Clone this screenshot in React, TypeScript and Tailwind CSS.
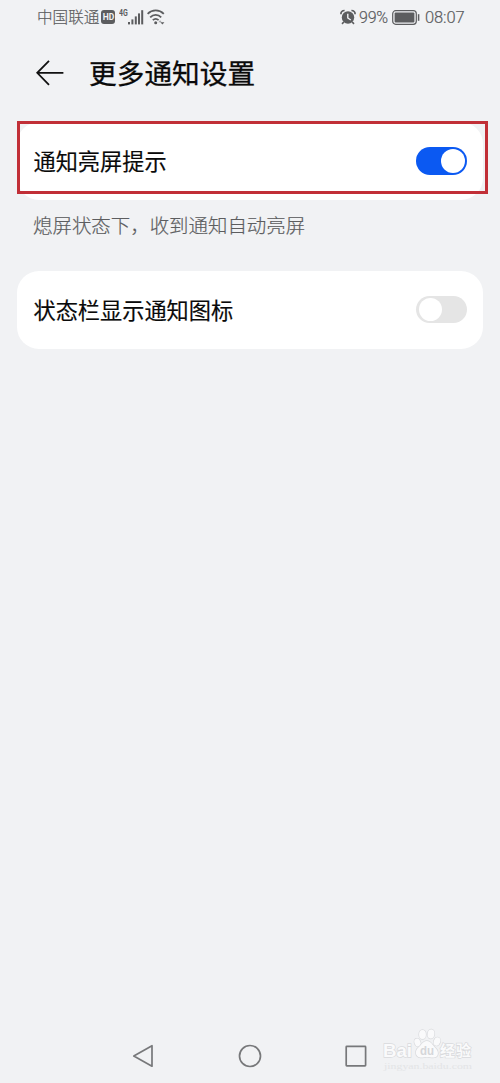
import React, { useState } from 'react'

function HdBadge() {
  return (
    <span className="flex h-[14px] w-[14px] items-center justify-center rounded-[3px] bg-[#5c5d5f] font-['Roboto',sans-serif] text-[8.5px] leading-none font-bold text-[#f1f2f4]">
      HD
    </span>
  )
}

function SignalIcon() {
  return (
    <svg className="h-[15px] w-[16px]" viewBox="0 0 16 15" fill="#5c5d5f">
      <rect x="0" y="12" width="2" height="2.4" />
      <rect x="3.4" y="9.4" width="2" height="5" />
      <rect x="6.8" y="6.4" width="2" height="8" />
      <rect x="10" y="3.4" width="2" height="11" />
      <rect x="13.2" y="0.2" width="2" height="14.2" />
    </svg>
  )
}

function WifiIcon() {
  return (
    <svg className="h-[16px] w-[18px]" viewBox="0 0 18 16" fill="none" stroke="#5c5d5f" strokeWidth="1.8">
      <path d="M0.6 4.9C5.2 0.3 12.2 0.3 16.8 4.9" />
      <path d="M3.2 8.3C6.3 5.1 11.1 5.1 14.2 8.3" />
      <path d="M5.8 11.2C7.5 9.6 9.9 9.6 11.6 11.2" />
      <circle cx="8.7" cy="13.8" r="1.5" fill="#5c5d5f" stroke="none" />
      <path d="M11.4 13.2l1.7-2 1.7 2z" fill="#a5a6a8" stroke="none" />
      <path d="M13.4 13.2h4l-2 2.3z" fill="#5c5d5f" stroke="none" />
    </svg>
  )
}

function AlarmIcon() {
  return (
    <svg className="h-[16px] w-[16px]" viewBox="0 0 16 16" fill="none">
      <circle cx="8" cy="8.5" r="6.2" fill="#5c5d5f" />
      <path
        d="M0.9 5.2C0.9 3 2.4 1.5 4.6 1.5M15.1 5.2C15.1 3 13.6 1.5 11.4 1.5M3.8 13L2 14.8M12.2 13l1.8 1.8"
        stroke="#5c5d5f"
        strokeWidth="1.7"
      />
      <path d="M7.8 4.8v4.2l3 2" stroke="#f1f2f4" strokeWidth="1.4" />
    </svg>
  )
}

function BatteryIcon() {
  return (
    <svg className="h-[15px] w-[28px]" viewBox="0 0 28 15" fill="none">
      <rect x="0.7" y="0.7" width="23.6" height="13.6" rx="3" stroke="#5c5d5f" strokeWidth="1.2" />
      <rect x="2.6" y="2.6" width="19.8" height="9.8" rx="1" fill="#5c5d5f" />
      <path d="M26.6 4.2v6.6" stroke="#5c5d5f" strokeWidth="1.5" />
    </svg>
  )
}

function StatusBar() {
  return (
    <div className="flex h-[34px] items-center justify-between pr-[36px] pl-[37px] text-[#5c5d5f]">
      <div className="flex items-center">
        <span className="text-[15.6px] leading-none font-light [-webkit-text-stroke:0.2px_#5c5d5f]">中国联通</span>
        <div className="ml-[2px]">
          <HdBadge />
        </div>
        <span className="mb-[8px] ml-[4px] w-[9px] origin-left scale-x-[0.82] font-['Roboto',sans-serif] text-[8.5px] leading-none font-bold">
          4G
        </span>
        <SignalIcon />
        <div className="ml-[3px]">
          <WifiIcon />
        </div>
      </div>
      <div className="flex items-center font-['Roboto',sans-serif] text-[16.5px] leading-none font-light [-webkit-text-stroke:0.2px_#5c5d5f]">
        <AlarmIcon />
        <span className="mt-[2px] ml-[3px] w-[30px] text-[16px] tracking-[-0.2px]">99%</span>
        <div className="ml-[3px]">
          <BatteryIcon />
        </div>
        <span className="mt-[2px] ml-[5px] w-[39px] tracking-[-0.1px]">08:07</span>
      </div>
    </div>
  )
}

function Header() {
  return (
    <header className="flex h-[78px] items-center pl-[36px]">
      <svg className="mt-[-1px] h-[26px] w-[28px]" viewBox="0 0 28 26" fill="none" stroke="#111" strokeWidth="1.8">
        <path d="M13 0.8L1.2 12.8L13 24.8M1.2 12.8H27.4" />
      </svg>
      <h1 className="ml-[25px] text-[27.7px] leading-none font-normal text-[#0a0a0a] [-webkit-text-stroke:0.3px_#0a0a0a]">
        更多通知设置
      </h1>
    </header>
  )
}

type ToggleProps = {
  checked: boolean
  onChange: () => void
}

function Toggle({ checked, onChange }: ToggleProps) {
  return (
    <button
      role="switch"
      aria-checked={checked}
      onClick={onChange}
      className={`flex w-[51px] items-center rounded-full px-[2.5px] ${
        checked ? 'h-[28px] justify-end bg-[#0b59f2]' : 'mb-px h-[27px] justify-start bg-[#e5e5e5]'
      }`}
    >
      <span className="h-[23.5px] w-[23.5px] rounded-full bg-white" />
    </button>
  )
}

type SettingCardProps = ToggleProps & {
  label: string
}

function SettingCard({ label, checked, onChange }: SettingCardProps) {
  return (
    <div className="flex h-[78px] items-center justify-between rounded-[22px] bg-white pr-[16px] pl-[16.5px]">
      <span className="mb-[1px] text-[22.2px] leading-none font-normal text-[#0a0a0a] [-webkit-text-stroke:0.15px_#0a0a0a]">
        {label}
      </span>
      <Toggle checked={checked} onChange={onChange} />
    </div>
  )
}

function Watermark() {
  return (
    <div className="absolute top-[1027px] left-[382px] w-[92px] font-['Liberation_Sans','Noto_Sans_CJK_SC',sans-serif]">
      <svg
        className="h-[46px] w-[92px]"
        viewBox="0 0 92 46"
        fill="#fafafb"
        stroke="#d9dadd"
        strokeWidth="1.4"
        paintOrder="stroke"
      >
        <text x="1" y="30" fontSize="19" fontWeight="bold" textLength="29" lengthAdjust="spacingAndGlyphs">Bai</text>
        <ellipse cx="35.5" cy="15.5" rx="3" ry="4" transform="rotate(-20 35.5 15.5)" />
        <ellipse cx="40.5" cy="7.5" rx="3.4" ry="4.6" />
        <ellipse cx="49" cy="7" rx="3.4" ry="4.6" transform="rotate(8 49 7)" />
        <ellipse cx="55" cy="14.5" rx="3.2" ry="4.2" transform="rotate(20 55 14.5)" />
        <path d="M44.8 14c-4 0-5.2 4-8.4 6.6-3.6 2.9-3.6 9.5 2 9.9 2.6 0.2 4-0.6 6.6-0.6s4.4 0.8 7 0.5c5.4-0.6 4.6-6.9 1.4-9.5C50.2 18 49 14 44.8 14z" />
        <text x="38" y="28" fontSize="12" fontWeight="bold" textLength="14" lengthAdjust="spacingAndGlyphs" fill="#d5d6d9" stroke="none">
          du
        </text>
        <text x="58" y="29" fontSize="15" fontWeight="bold" textLength="31">经验</text>
        <text
          x="2"
          y="42"
          fontSize="8.5"
          textLength="88"
          lengthAdjust="spacingAndGlyphs"
          fill="#e3e4e6"
          stroke="none"
          className="font-['Liberation_Serif',serif]"
        >
          jingyan.baidu.com
        </text>
      </svg>
    </div>
  )
}

function NavBar() {
  return (
    <nav className="flex h-[54px] items-center justify-between pr-[133px] pl-[132px]">
      <svg className="h-[24px] w-[22px]" viewBox="0 0 22 24" fill="none" stroke="#77787a" strokeWidth="1.7" strokeLinejoin="round">
        <path d="M20 1.7V22.2L1.8 12.1z" />
      </svg>
      <svg className="h-[24px] w-[24px]" viewBox="0 0 24 24" fill="none" stroke="#77787a" strokeWidth="1.7">
        <circle cx="12" cy="12" r="10.5" />
      </svg>
      <svg className="h-[24px] w-[22px]" viewBox="0 0 22 24" fill="none" stroke="#77787a" strokeWidth="1.7">
        <rect x="1.2" y="2.4" width="19.4" height="19.4" rx="0.6" />
      </svg>
    </nav>
  )
}

export default function App() {
  const [wakeScreen, setWakeScreen] = useState(true)
  const [showIcons, setShowIcons] = useState(false)

  return (
    <div className="relative flex h-[1083px] w-[500px] flex-col overflow-hidden bg-[#f1f2f4] font-['Noto_Sans_CJK_SC',sans-serif]">
      <StatusBar />
      <Header />

      <main className="flex flex-1 flex-col px-[17px] pt-[10px]">
        <div className="relative">
          <SettingCard
            label="通知亮屏提示"
            checked={wakeScreen}
            onChange={() => setWakeScreen(!wakeScreen)}
          />
          {/* Highlight frame */}
          <div className="pointer-events-none absolute top-[-1px] right-[-5px] left-0 h-[73px] border-[3px] border-[#c12f37]" />
        </div>
        <p className="mt-[15px] pl-[16px] text-[19.45px] leading-[20px] font-light text-[#5c5d5f] [-webkit-text-stroke:0.2px_#5c5d5f]">
          熄屏状态下，收到通知自动亮屏
        </p>
        <div className="mt-[36px]">
          <SettingCard
            label="状态栏显示通知图标"
            checked={showIcons}
            onChange={() => setShowIcons(!showIcons)}
          />
        </div>
      </main>

      <NavBar />
      <Watermark />
    </div>
  )
}
